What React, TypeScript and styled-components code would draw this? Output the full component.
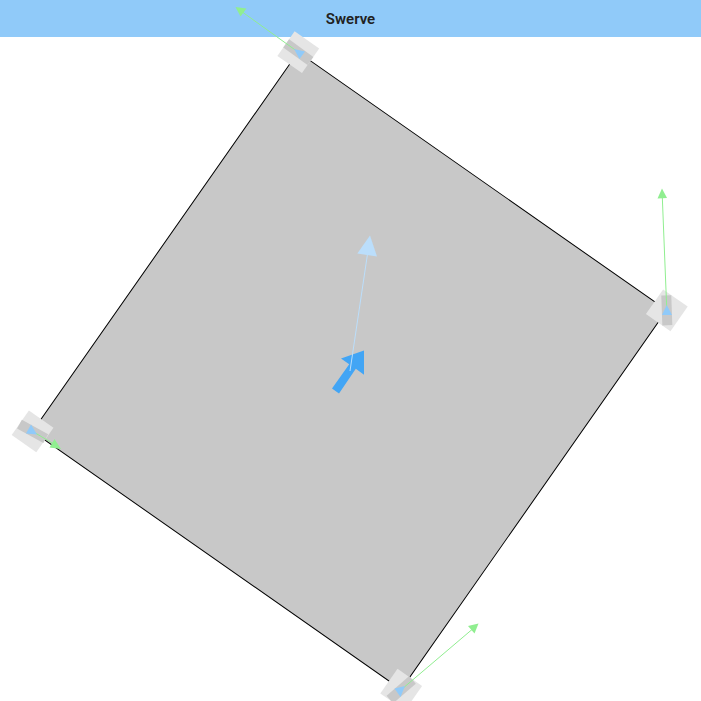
import React from "react";
import styled, { createGlobalStyle } from "styled-components";

const GlobalStyle = createGlobalStyle`
  body {
    margin: 0;
    background: #ffffff;
    font-family: Roboto, "Liberation Sans", sans-serif;
  }
`;

const Page = styled.main`
  display: flex;
  flex-direction: column;
  min-height: 100vh;
  overflow: hidden;
`;

const TitleBar = styled.header`
  display: flex;
  align-items: center;
  justify-content: center;
  padding: 9px 8px 8px;
  background: #90caf9;
`;

const Title = styled.h1`
  margin: 0;
  color: #212121;
  font-size: 15px;
  font-weight: 600;
  line-height: 20px;
`;

const Drawing = styled.svg`
  display: block;
  width: 100%;
  overflow: visible;
`;

type Module = {
  name: string;
  x: number;
  y: number;
  wheelAngle: number;
  line: [number, number];
  head: string;
  marker: string;
};

const HEADING = 35;

const modules: Module[] = [
  {
    name: "front left",
    x: 298.3,
    y: 52.2,
    wheelAngle: -54,
    line: [243, 12.5],
    head: "235.5,7 246.5,8.5 240.5,16.5",
    marker: "294,49 305,51.5 299.5,59",
  },
  {
    name: "front right",
    x: 666.8,
    y: 310.3,
    wheelAngle: -2,
    line: [662.3, 197],
    head: "662,188.5 667,198 657.5,198.5",
    marker: "666.7,305 672,315 662,315",
  },
  {
    name: "back left",
    x: 32.6,
    y: 431.4,
    wheelAngle: 119,
    line: [53, 443.5],
    head: "61,449 49.5,447.5 54.5,439",
    marker: "31,424.5 37,434.5 26,433.5",
  },
  {
    name: "back right",
    x: 401.2,
    y: 689.7,
    wheelAngle: 49,
    line: [472, 629.5],
    head: "478.5,623.5 474.5,633.5 468,626",
    marker: "405,686 394.5,688.5 400.5,697",
  },
];

function SwerveModule({ module }: { module: Module }) {
  const { x, y, wheelAngle, line, head, marker } = module;
  return (
    <g>
      <rect
        x={-15}
        y={-15}
        width={30}
        height={30}
        fill="#e5e5e5"
        transform={`translate(${x} ${y}) rotate(${HEADING})`}
      />
      <rect
        x={-5}
        y={-15}
        width={10}
        height={30}
        fill="#c8c8c8"
        transform={`translate(${x} ${y}) rotate(${wheelAngle})`}
      />
      <line x1={x} y1={y} x2={line[0]} y2={line[1]} stroke="#90ee90" />
      <polygon points={head} fill="#90ee90" />
      <polygon points={marker} fill="#90caf9" />
    </g>
  );
}

export default function App() {
  return (
    <>
      <GlobalStyle />
      <Page>
        <TitleBar>
          <Title>Swerve</Title>
        </TitleBar>
        <Drawing viewBox="0 37 701 664" role="img" aria-label="Swerve drive state">
          <rect
            x={-225}
            y={-231.5}
            width={450}
            height={463}
            fill="#c8c8c8"
            stroke="#000000"
            transform={`translate(349.6 370.8) rotate(${HEADING})`}
          />
          {modules.map((module) => (
            <SwerveModule key={module.name} module={module} />
          ))}
          <polygon
            points="332,388.5 349.2,364.2 341,358.5 364,350.5 364,374.7 355.8,368.8 339,393.5"
            fill="#42a5f5"
          />
          <line x1={350} y1={371} x2={367.5} y2={254} stroke="#bbdefb" />
          <polygon points="370,235.5 377,256.5 357.3,253.5" fill="#bbdefb" />
        </Drawing>
      </Page>
    </>
  );
}
